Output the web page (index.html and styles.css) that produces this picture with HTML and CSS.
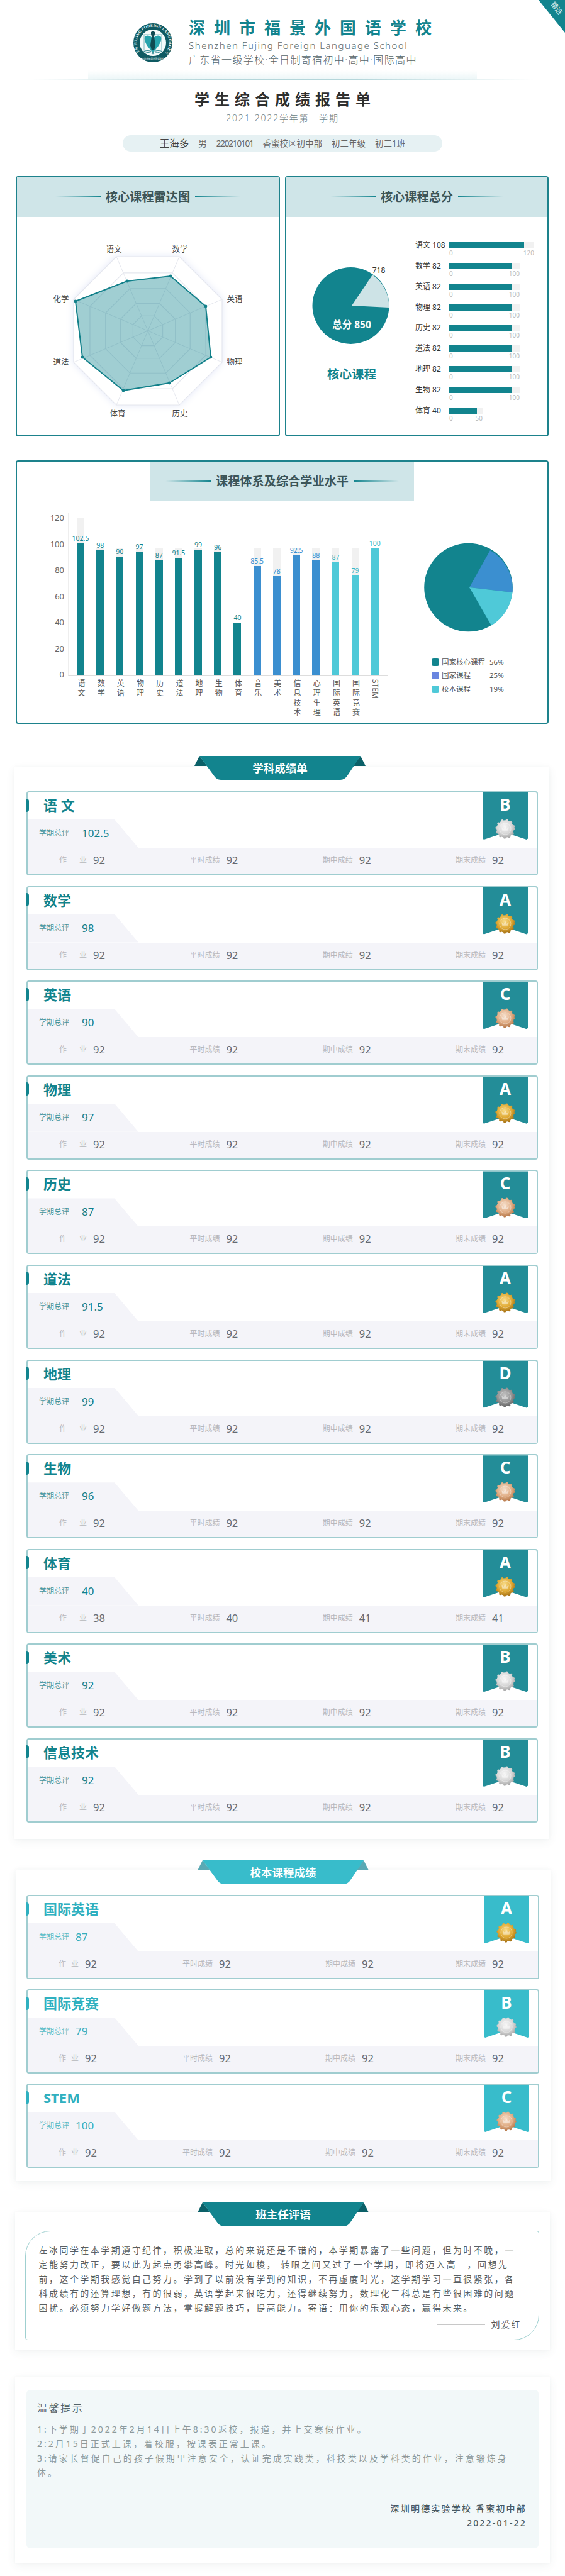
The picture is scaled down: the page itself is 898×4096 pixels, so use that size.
FILE: index.html
```html
<!DOCTYPE html>
<html lang="zh-CN">
<head>
<meta charset="utf-8">
<title>学生综合成绩报告单</title>
<link rel="stylesheet" href="styles.css">
</head>
<body>
<svg class="defs" aria-hidden="true">
  <defs>
    <radialGradient id="g-a" cx="45%" cy="35%" r="70%"><stop offset="0" stop-color="#f8dc8a"/><stop offset=".6" stop-color="#dfa832"/><stop offset="1" stop-color="#a87418"/></radialGradient>
    <radialGradient id="g-b" cx="45%" cy="35%" r="70%"><stop offset="0" stop-color="#f6f6f6"/><stop offset=".6" stop-color="#d8d8d8"/><stop offset="1" stop-color="#a9a9a9"/></radialGradient>
    <radialGradient id="g-c" cx="45%" cy="35%" r="70%"><stop offset="0" stop-color="#f6dfcb"/><stop offset=".6" stop-color="#e0ad85"/><stop offset="1" stop-color="#b87a4c"/></radialGradient>
    <radialGradient id="g-d" cx="45%" cy="35%" r="70%"><stop offset="0" stop-color="#c2c2c2"/><stop offset=".6" stop-color="#949494"/><stop offset="1" stop-color="#686868"/></radialGradient>
    <symbol id="medal-a" viewBox="-18 -18 36 36"><circle r="14.5" fill="url(#g-a)"/><circle class="scallop" r="14.5" stroke="url(#g-a)"/><circle class="medal-ring" r="9.5"/><path class="medal-crown" d="M-5 3 L-6 -3 L-2.5 0 L0 -5 L2.5 0 L6 -3 L5 3 Z"/></symbol>
    <symbol id="medal-b" viewBox="-18 -18 36 36"><circle r="14.5" fill="url(#g-b)"/><circle class="scallop" r="14.5" stroke="url(#g-b)"/><circle class="medal-ring" r="9.5"/><path class="medal-crown" d="M-5 3 L-6 -3 L-2.5 0 L0 -5 L2.5 0 L6 -3 L5 3 Z"/></symbol>
    <symbol id="medal-c" viewBox="-18 -18 36 36"><circle r="14.5" fill="url(#g-c)"/><circle class="scallop" r="14.5" stroke="url(#g-c)"/><circle class="medal-ring" r="9.5"/><path class="medal-crown" d="M-5 3 L-6 -3 L-2.5 0 L0 -5 L2.5 0 L6 -3 L5 3 Z"/></symbol>
    <symbol id="medal-d" viewBox="-18 -18 36 36"><circle r="14.5" fill="url(#g-d)"/><circle class="scallop" r="14.5" stroke="url(#g-d)"/><circle class="medal-ring" r="9.5"/><path class="medal-crown" d="M-5 3 L-6 -3 L-2.5 0 L0 -5 L2.5 0 L6 -3 L5 3 Z"/></symbol>
  </defs>
</svg>

<div class="page">
  <div class="corner"><span class="corner-text">精选</span></div>

  <header class="brand">
    <svg class="logo" viewBox="-31 -31 62 62">
      <defs><path id="logo-arc" d="M-20 16 A25.6 25.6 0 1 1 20 16"/></defs>
      <circle r="31" fill="#0f5a62"/>
      <text class="logo-text"><textPath href="#logo-arc" startOffset="50%" text-anchor="middle">SHENZHEN FUJING FOREIGN LANGUAGE SCHOOL</textPath></text>
      <text class="logo-cn" x="0" y="26.5" text-anchor="middle">深圳市福景外国语学校</text>
      <circle r="21" fill="#f4fafa"/>
      <rect x="-14" y="-13" width="28" height="25" fill="none" stroke="#7fb6bb" stroke-width="1"/>
      <path d="M-13 -9 C-9 -14 -3 -11 0 -6 C3 -11 9 -14 13 -9 C15 -2 7 9 0 15 C-7 9 -15 -2 -13 -9 Z" fill="#27a4ad"/>
      <path d="M-3 -14 H3 L2 -10 L4 4 L2 12 H-2 L-4 4 L-2 -10 Z" fill="#0f4a52"/>
      <path d="M-3 -17 L0 -19 L3 -17 L3 -14 H-3 Z" fill="#0f4a52"/>
      <path d="M-15 14 C-8 11 -3 13 0 16 C3 13 8 11 15 14 M-13 17 C-8 14 -3 16 0 18 C3 16 8 14 13 17" fill="none" stroke="#3a8f98" stroke-width="1"/>
    </svg>
    <div class="brand-text">
      <div class="school-cn">深圳市福景外国语学校</div>
      <div class="school-en">Shenzhen Fujing Foreign Language School</div>
      <div class="school-sub">广东省一级学校·全日制寄宿初中·高中·国际高中</div>
    </div>
  </header>
  <div class="rule-glow"></div>
  <div class="rule"></div>

  <h1 class="report-title">学生综合成绩报告单</h1>
  <div class="report-term">2021-2022学年第一学期</div>
  <div class="student">
    <span class="student-name">王海多</span>
    <span>男</span>
    <span class="student-id">220210101</span>
    <span>香蜜校区初中部</span>
    <span>初二年级</span>
    <span>初二1班</span>
  </div>

  <div class="two-up">
    <section class="panel panel-radar">
      <div class="panel-head"><i class="line line-l"></i><h2>核心课程雷达图</h2><i class="line line-r"></i></div>
      <svg class="radar" viewBox="27 343 416 347">
        <g transform="translate(235 524)">
          <polygon class="ring ring-outer" points="-50,-118 50,-118 118,-50 118,50 50,118 -50,118 -118,50 -118,-50"/>
          <polygon class="ring" transform="scale(.78)" points="-50,-118 50,-118 118,-50 118,50 50,118 -50,118 -118,50 -118,-50"/>
          <polygon class="ring" transform="scale(.57)" points="-50,-118 50,-118 118,-50 118,50 50,118 -50,118 -118,50 -118,-50"/>
          <polygon class="ring" transform="scale(.37)" points="-50,-118 50,-118 118,-50 118,50 50,118 -50,118 -118,50 -118,-50"/>
          <polygon class="ring" transform="scale(.2)" points="-50,-118 50,-118 118,-50 118,50 50,118 -50,118 -118,50 -118,-50"/>
          <path class="spoke" d="M0 0 L-50 -118 M0 0 L50 -118 M0 0 L118 -50 M0 0 L118 50 M0 0 L50 118 M0 0 L-50 118 M0 0 L-118 50 M0 0 L-118 -50"/>
        </g>
        <polygon class="radar-area" points="202,445 271,437 327,485 335,566 269,607 196,619 131,566 120,477"/>
        <g class="radar-dots">
          <circle cx="202" cy="445" r="2.4"/><circle cx="271" cy="437" r="2.4"/><circle cx="327" cy="485" r="2.4"/><circle cx="335" cy="566" r="2.4"/>
          <circle cx="269" cy="607" r="2.4"/><circle cx="196" cy="619" r="2.4"/><circle cx="131" cy="566" r="2.4"/><circle cx="120" cy="477" r="2.4"/>
        </g>
        <g class="radar-labels">
          <text x="181" y="399">语文</text><text x="286" y="399">数学</text><text x="373" y="478">英语</text><text x="373" y="578">物理</text>
          <text x="286" y="660">历史</text><text x="187" y="660">体育</text><text x="97" y="578">道法</text><text x="97" y="478">化学</text>
        </g>
      </svg>
    </section>

    <section class="panel panel-total">
      <div class="panel-head"><i class="line line-l"></i><h2>核心课程总分</h2><i class="line line-r"></i></div>
      <div class="total-body">
        <div class="total-pie">
          <svg class="pie-small" viewBox="455 413 205 140">
            <circle cx="557.5" cy="484" r="61" fill="#12848e"/>
            <path d="M559 484 L592 435 A61 61 0 0 1 618.4 487 Z" fill="#cde3e6"/>
            <text class="pie-note" x="602" y="432" text-anchor="middle">718</text>
            <text class="pie-total" x="559" y="520" text-anchor="middle">总分 850</text>
          </svg>
          <div class="pie-caption">核心课程</div>
        </div>
        <div class="hbars">
          <div class="hbar"><span class="hbar-label">语文 108</span><div class="hbar-col" style="width:135px"><div class="hbar-track"><div class="hbar-fill" style="width:88%"></div></div><div class="hbar-axis"><span>0</span><span>120</span></div></div></div>
          <div class="hbar"><span class="hbar-label">数学 82</span><div class="hbar-col" style="width:112px"><div class="hbar-track"><div class="hbar-fill" style="width:89%"></div></div><div class="hbar-axis"><span>0</span><span>100</span></div></div></div>
          <div class="hbar"><span class="hbar-label">英语 82</span><div class="hbar-col" style="width:112px"><div class="hbar-track"><div class="hbar-fill" style="width:89%"></div></div><div class="hbar-axis"><span>0</span><span>100</span></div></div></div>
          <div class="hbar"><span class="hbar-label">物理 82</span><div class="hbar-col" style="width:112px"><div class="hbar-track"><div class="hbar-fill" style="width:89%"></div></div><div class="hbar-axis"><span>0</span><span>100</span></div></div></div>
          <div class="hbar"><span class="hbar-label">历史 82</span><div class="hbar-col" style="width:112px"><div class="hbar-track"><div class="hbar-fill" style="width:89%"></div></div><div class="hbar-axis"><span>0</span><span>100</span></div></div></div>
          <div class="hbar"><span class="hbar-label">道法 82</span><div class="hbar-col" style="width:112px"><div class="hbar-track"><div class="hbar-fill" style="width:89%"></div></div><div class="hbar-axis"><span>0</span><span>100</span></div></div></div>
          <div class="hbar"><span class="hbar-label">地理 82</span><div class="hbar-col" style="width:112px"><div class="hbar-track"><div class="hbar-fill" style="width:89%"></div></div><div class="hbar-axis"><span>0</span><span>100</span></div></div></div>
          <div class="hbar"><span class="hbar-label">生物 82</span><div class="hbar-col" style="width:112px"><div class="hbar-track"><div class="hbar-fill" style="width:89%"></div></div><div class="hbar-axis"><span>0</span><span>100</span></div></div></div>
          <div class="hbar"><span class="hbar-label">体育 40</span><div class="hbar-col" style="width:53px"><div class="hbar-track"><div class="hbar-fill" style="width:83%"></div></div><div class="hbar-axis"><span>0</span><span>50</span></div></div></div>
        </div>
      </div>
    </section>
  </div>

  <section class="panel panel-wide">
    <div class="panel-head panel-head-mid"><i class="line line-l"></i><h2>课程体系及综合学业水平</h2><i class="line line-r"></i></div>
    <div class="wide-body">
      <div class="yaxis"><span>120</span><span>100</span><span>80</span><span>60</span><span>40</span><span>20</span><span>0</span></div>
      <div class="plot-wrap">
        <div class="plot">
          <div class="vcol core"><i class="vtrack" style="height:251px"></i><span class="vval">102.5</span><i class="vbar" style="height:210px"></i></div>
          <div class="vcol core"><i class="vtrack" style="height:203px"></i><span class="vval">98</span><i class="vbar" style="height:199px"></i></div>
          <div class="vcol core"><i class="vtrack" style="height:203px"></i><span class="vval">90</span><i class="vbar" style="height:189px"></i></div>
          <div class="vcol core"><i class="vtrack" style="height:203px"></i><span class="vval">97</span><i class="vbar" style="height:197px"></i></div>
          <div class="vcol core"><i class="vtrack" style="height:203px"></i><span class="vval">87</span><i class="vbar" style="height:183px"></i></div>
          <div class="vcol core"><i class="vtrack" style="height:203px"></i><span class="vval">91.5</span><i class="vbar" style="height:187px"></i></div>
          <div class="vcol core"><i class="vtrack" style="height:203px"></i><span class="vval">99</span><i class="vbar" style="height:200px"></i></div>
          <div class="vcol core"><i class="vtrack" style="height:203px"></i><span class="vval">96</span><i class="vbar" style="height:196px"></i></div>
          <div class="vcol core"><span class="vval">40</span><i class="vbar" style="height:84px"></i></div>
          <div class="vcol nat"><i class="vtrack" style="height:203px"></i><span class="vval">85.5</span><i class="vbar" style="height:174px"></i></div>
          <div class="vcol nat"><i class="vtrack" style="height:203px"></i><span class="vval">78</span><i class="vbar" style="height:158px"></i></div>
          <div class="vcol nat"><i class="vtrack" style="height:203px"></i><span class="vval">92.5</span><i class="vbar" style="height:191px"></i></div>
          <div class="vcol nat"><i class="vtrack" style="height:203px"></i><span class="vval">88</span><i class="vbar" style="height:183px"></i></div>
          <div class="vcol sch"><i class="vtrack" style="height:203px"></i><span class="vval">87</span><i class="vbar" style="height:180px"></i></div>
          <div class="vcol sch"><i class="vtrack" style="height:203px"></i><span class="vval">79</span><i class="vbar" style="height:159px"></i></div>
          <div class="vcol sch"><span class="vval">100</span><i class="vbar" style="height:202px"></i></div>
        </div>
        <div class="xlabels">
          <span>语文</span><span>数学</span><span>英语</span><span>物理</span><span>历史</span><span>道法</span><span>地理</span><span>生物</span>
          <span>体育</span><span>音乐</span><span>美术</span><span>信息技术</span><span>心理生理</span><span>国际英语</span><span>国际竞赛</span><span class="x-latin">STEM</span>
        </div>
      </div>
      <div class="mix">
        <svg class="pie-mix" viewBox="640 850 230 160">
          <circle cx="744.5" cy="932" r="70.3" fill="#12848e"/>
          <path d="M746 932 L779 873 A70.3 70.3 0 0 1 814.5 940 Z" fill="#3b8fd0"/>
          <path d="M746 932 L814.5 940 A70.3 70.3 0 0 1 781 992.5 Z" fill="#4fc9d8"/>
        </svg>
        <div class="legend">
          <i class="swatch sw-core"></i><span>国家核心课程</span><span>56%</span>
          <i class="swatch sw-nat"></i><span>国家课程</span><span>25%</span>
          <i class="swatch sw-sch"></i><span>校本课程</span><span>19%</span>
        </div>
      </div>
    </div>
  </section>

  <section class="sheet sheet-subject">
    <div class="ribbon ribbon-teal">
      <svg class="ribbon-art" viewBox="0 0 272 38"><path class="wing" d="M8 0 L0 16 H20 Z"/><path class="wing" d="M264 0 L272 16 H252 Z"/><path class="band" d="M8 0 H264 L244 30 Q239 38 232 38 H42 Q35 38 30 30 Z"/></svg>
      <span class="ribbon-title">学科成绩单</span>
    </div>
    <div class="courses">

      <article class="course">
        <div class="course-name">语 文</div>
        <div class="course-total"><span class="total-label">学期总评</span><span class="total-value">102.5</span></div>
        <div class="course-items"><div class="item"><span class="item-label item-wide">作业</span><b>92</b></div><div class="item"><span class="item-label">平时成绩</span><b>92</b></div><div class="item"><span class="item-label">期中成绩</span><b>92</b></div><div class="item"><span class="item-label">期末成绩</span><b>92</b></div></div>
        <div class="grade"><span class="grade-letter">B</span><svg class="medal"><use href="#medal-b"/></svg></div>
      </article>

      <article class="course">
        <div class="course-name">数学</div>
        <div class="course-total"><span class="total-label">学期总评</span><span class="total-value">98</span></div>
        <div class="course-items"><div class="item"><span class="item-label item-wide">作业</span><b>92</b></div><div class="item"><span class="item-label">平时成绩</span><b>92</b></div><div class="item"><span class="item-label">期中成绩</span><b>92</b></div><div class="item"><span class="item-label">期末成绩</span><b>92</b></div></div>
        <div class="grade"><span class="grade-letter">A</span><svg class="medal"><use href="#medal-a"/></svg></div>
      </article>

      <article class="course">
        <div class="course-name">英语</div>
        <div class="course-total"><span class="total-label">学期总评</span><span class="total-value">90</span></div>
        <div class="course-items"><div class="item"><span class="item-label item-wide">作业</span><b>92</b></div><div class="item"><span class="item-label">平时成绩</span><b>92</b></div><div class="item"><span class="item-label">期中成绩</span><b>92</b></div><div class="item"><span class="item-label">期末成绩</span><b>92</b></div></div>
        <div class="grade"><span class="grade-letter">C</span><svg class="medal"><use href="#medal-c"/></svg></div>
      </article>

      <article class="course">
        <div class="course-name">物理</div>
        <div class="course-total"><span class="total-label">学期总评</span><span class="total-value">97</span></div>
        <div class="course-items"><div class="item"><span class="item-label item-wide">作业</span><b>92</b></div><div class="item"><span class="item-label">平时成绩</span><b>92</b></div><div class="item"><span class="item-label">期中成绩</span><b>92</b></div><div class="item"><span class="item-label">期末成绩</span><b>92</b></div></div>
        <div class="grade"><span class="grade-letter">A</span><svg class="medal"><use href="#medal-a"/></svg></div>
      </article>

      <article class="course">
        <div class="course-name">历史</div>
        <div class="course-total"><span class="total-label">学期总评</span><span class="total-value">87</span></div>
        <div class="course-items"><div class="item"><span class="item-label item-wide">作业</span><b>92</b></div><div class="item"><span class="item-label">平时成绩</span><b>92</b></div><div class="item"><span class="item-label">期中成绩</span><b>92</b></div><div class="item"><span class="item-label">期末成绩</span><b>92</b></div></div>
        <div class="grade"><span class="grade-letter">C</span><svg class="medal"><use href="#medal-c"/></svg></div>
      </article>

      <article class="course">
        <div class="course-name">道法</div>
        <div class="course-total"><span class="total-label">学期总评</span><span class="total-value">91.5</span></div>
        <div class="course-items"><div class="item"><span class="item-label item-wide">作业</span><b>92</b></div><div class="item"><span class="item-label">平时成绩</span><b>92</b></div><div class="item"><span class="item-label">期中成绩</span><b>92</b></div><div class="item"><span class="item-label">期末成绩</span><b>92</b></div></div>
        <div class="grade"><span class="grade-letter">A</span><svg class="medal"><use href="#medal-a"/></svg></div>
      </article>

      <article class="course">
        <div class="course-name">地理</div>
        <div class="course-total"><span class="total-label">学期总评</span><span class="total-value">99</span></div>
        <div class="course-items"><div class="item"><span class="item-label item-wide">作业</span><b>92</b></div><div class="item"><span class="item-label">平时成绩</span><b>92</b></div><div class="item"><span class="item-label">期中成绩</span><b>92</b></div><div class="item"><span class="item-label">期末成绩</span><b>92</b></div></div>
        <div class="grade"><span class="grade-letter">D</span><svg class="medal"><use href="#medal-d"/></svg></div>
      </article>

      <article class="course">
        <div class="course-name">生物</div>
        <div class="course-total"><span class="total-label">学期总评</span><span class="total-value">96</span></div>
        <div class="course-items"><div class="item"><span class="item-label item-wide">作业</span><b>92</b></div><div class="item"><span class="item-label">平时成绩</span><b>92</b></div><div class="item"><span class="item-label">期中成绩</span><b>92</b></div><div class="item"><span class="item-label">期末成绩</span><b>92</b></div></div>
        <div class="grade"><span class="grade-letter">C</span><svg class="medal"><use href="#medal-c"/></svg></div>
      </article>

      <article class="course">
        <div class="course-name">体育</div>
        <div class="course-total"><span class="total-label">学期总评</span><span class="total-value">40</span></div>
        <div class="course-items"><div class="item"><span class="item-label item-wide">作业</span><b>38</b></div><div class="item"><span class="item-label">平时成绩</span><b>40</b></div><div class="item"><span class="item-label">期中成绩</span><b>41</b></div><div class="item"><span class="item-label">期末成绩</span><b>41</b></div></div>
        <div class="grade"><span class="grade-letter">A</span><svg class="medal"><use href="#medal-a"/></svg></div>
      </article>

      <article class="course">
        <div class="course-name">美术</div>
        <div class="course-total"><span class="total-label">学期总评</span><span class="total-value">92</span></div>
        <div class="course-items"><div class="item"><span class="item-label item-wide">作业</span><b>92</b></div><div class="item"><span class="item-label">平时成绩</span><b>92</b></div><div class="item"><span class="item-label">期中成绩</span><b>92</b></div><div class="item"><span class="item-label">期末成绩</span><b>92</b></div></div>
        <div class="grade"><span class="grade-letter">B</span><svg class="medal"><use href="#medal-b"/></svg></div>
      </article>

      <article class="course">
        <div class="course-name">信息技术</div>
        <div class="course-total"><span class="total-label">学期总评</span><span class="total-value">92</span></div>
        <div class="course-items"><div class="item"><span class="item-label item-wide">作业</span><b>92</b></div><div class="item"><span class="item-label">平时成绩</span><b>92</b></div><div class="item"><span class="item-label">期中成绩</span><b>92</b></div><div class="item"><span class="item-label">期末成绩</span><b>92</b></div></div>
        <div class="grade"><span class="grade-letter">B</span><svg class="medal"><use href="#medal-b"/></svg></div>
      </article>

    </div>
  </section>

  <section class="sheet sheet-school">
    <div class="ribbon ribbon-cyan">
      <svg class="ribbon-art" viewBox="0 0 272 38"><path class="wing" d="M8 0 L0 16 H20 Z"/><path class="wing" d="M264 0 L272 16 H252 Z"/><path class="band" d="M8 0 H264 L244 30 Q239 38 232 38 H42 Q35 38 30 30 Z"/></svg>
      <span class="ribbon-title">校本课程成绩</span>
    </div>
    <div class="courses courses-school">

      <article class="course course-school">
        <div class="course-name">国际英语</div>
        <div class="course-total"><span class="total-label">学期总评</span><span class="total-value">87</span></div>
        <div class="course-items"><div class="item"><span class="item-label item-narrow">作业</span><b>92</b></div><div class="item"><span class="item-label">平时成绩</span><b>92</b></div><div class="item"><span class="item-label">期中成绩</span><b>92</b></div><div class="item"><span class="item-label">期末成绩</span><b>92</b></div></div>
        <div class="grade"><span class="grade-letter">A</span><svg class="medal"><use href="#medal-a"/></svg></div>
      </article>

      <article class="course course-school">
        <div class="course-name">国际竞赛</div>
        <div class="course-total"><span class="total-label">学期总评</span><span class="total-value">79</span></div>
        <div class="course-items"><div class="item"><span class="item-label item-narrow">作业</span><b>92</b></div><div class="item"><span class="item-label">平时成绩</span><b>92</b></div><div class="item"><span class="item-label">期中成绩</span><b>92</b></div><div class="item"><span class="item-label">期末成绩</span><b>92</b></div></div>
        <div class="grade"><span class="grade-letter">B</span><svg class="medal"><use href="#medal-b"/></svg></div>
      </article>

      <article class="course course-school">
        <div class="course-name">STEM</div>
        <div class="course-total"><span class="total-label">学期总评</span><span class="total-value">100</span></div>
        <div class="course-items"><div class="item"><span class="item-label item-narrow">作业</span><b>92</b></div><div class="item"><span class="item-label">平时成绩</span><b>92</b></div><div class="item"><span class="item-label">期中成绩</span><b>92</b></div><div class="item"><span class="item-label">期末成绩</span><b>92</b></div></div>
        <div class="grade"><span class="grade-letter">C</span><svg class="medal"><use href="#medal-c"/></svg></div>
      </article>

    </div>
  </section>

  <section class="sheet sheet-comment">
    <div class="ribbon ribbon-teal">
      <svg class="ribbon-art" viewBox="0 0 272 38"><path class="wing" d="M8 0 L0 16 H20 Z"/><path class="wing" d="M264 0 L272 16 H252 Z"/><path class="band" d="M8 0 H264 L244 30 Q239 38 232 38 H42 Q35 38 30 30 Z"/></svg>
      <span class="ribbon-title">班主任评语</span>
    </div>
    <div class="comment">
      <p class="comment-text">左冰同学在本学期遵守纪律，积极进取，总的来说还是不错的，本学期暴露了一些问题，但为时不晚，一定能努力改正，要以此为起点勇攀高峰。时光如梭， 转眼之间又过了一个学期，即将迈入高三，回想先前，这个学期我感觉自己努力。学到了以前没有学到的知识，不再虚度时光，这学期学习一直很紧张，各科成绩有的还算理想，有的很弱，英语学起来很吃力，还得继续努力，数理化三科总是有些很困难的问题困扰。必须努力学好做题方法，掌握解题技巧，提高能力。寄语：用你的乐观心态，赢得未来。</p>
      <div class="signature"><i class="signature-line"></i><span>刘爱红</span></div>
    </div>
  </section>

  <section class="sheet sheet-tips">
    <div class="tips">
      <h3 class="tips-title">温馨提示</h3>
      <p class="tips-line">1:下学期于2022年2月14日上午8:30返校，报道，并上交寒假作业。</p>
      <p class="tips-line">2:2月15日正式上课，着校服，按课表正常上课。</p>
      <p class="tips-line">3:请家长督促自己的孩子假期里注意安全，认证完成实践类，科技类以及学科类的作业，注意锻炼身体。</p>
      <div class="tips-sign">深圳明德实验学校 香蜜初中部</div>
      <div class="tips-sign">2022-01-22</div>
    </div>
  </section>

  <div class="end-line"></div>
</div>
</body>
</html>
```

FILE: styles.css
```css
* { box-sizing: border-box; }
html, body { margin: 0; padding: 0; background: #fff; }
body { font-family: "Noto Sans", "Noto Sans CJK SC", sans-serif; color: #444; }
h1, h2, h3, p { margin: 0; }
i { display: block; }
.defs { position: absolute; width: 0; height: 0; }
.page { position: relative; width: 898px; height: 4096px; overflow: hidden; background: #fff; }

/* corner tag */
.corner { position: absolute; top: 0; right: 0; width: 42px; height: 52px; background: #12848e; clip-path: polygon(0 0, 100% 0, 100% 100%); }
.corner-text { position: absolute; top: 6px; right: 2px; font-size: 11px; line-height: 14px; color: #e6f4f5; transform: rotate(52deg); }

/* header */
.brand { display: flex; align-items: center; gap: 26px; padding: 37px 0 0 212px; height: 99px; }
.logo { width: 62px; height: 62px; flex: none; }
.logo-text { font: 700 6.2px "Liberation Serif", serif; fill: #e8f4f4; letter-spacing: .25px; }
.logo-cn { font-size: 3.6px; fill: #e8f4f4; }
.brand-text { margin-top: -1px; }
.school-cn { font-size: 26px; line-height: 26px; font-weight: 700; color: #12848e; letter-spacing: 14px; white-space: nowrap; }
.school-en { margin-top: 5px; font-size: 15px; line-height: 20px; font-weight: 300; color: #5b696c; letter-spacing: 1.5px; white-space: nowrap; }
.school-sub { margin-top: 3px; font-size: 16px; line-height: 20px; font-weight: 300; color: #556468; letter-spacing: 1.35px; white-space: nowrap; }
.rule-glow { height: 13px; margin: 13px 140px 0; background: linear-gradient(to bottom, rgba(236,246,247,0), #eef7f8); }
.rule { height: 2px; margin: 0 50px; background: linear-gradient(to right, rgba(180,214,218,0), #b4d6da 35%, #b4d6da 65%, rgba(180,214,218,0)); }

.report-title { margin-top: 15px; padding-left: 8px; text-align: center; font-size: 24px; line-height: 32px; font-weight: 700; letter-spacing: 8px; color: #2f2f2f; }
.report-term { margin-top: 4px; text-align: center; font-size: 14px; line-height: 20px; font-weight: 300; letter-spacing: 1.8px; color: #6f7f85; }
.student { display: flex; justify-content: center; align-items: center; gap: 15px; width: 508px; height: 26px; margin: 17px 0 0 195px; border-radius: 13px; background: #e6f1f3; font-size: 13.5px; line-height: 26px; color: #666; white-space: nowrap; }
.student-name { font-size: 15.5px; color: #444; }
.student-id { letter-spacing: -1.2px; }

/* panels */
.two-up { display: flex; gap: 8px; margin: 39px 0 0 25px; }
.panel { border: 2px solid #1d828c; border-radius: 4px; background: #fff; }
.panel-radar { width: 420px; height: 414px; }
.panel-total { width: 419px; height: 414px; }
.panel-head { display: flex; align-items: center; justify-content: center; gap: 8px; height: 63px; background: #cfe5e8; padding-bottom: 2px; }
.panel-head h2 { font-size: 19.2px; line-height: 28px; font-weight: 700; color: #3d5558; white-space: nowrap; }
.line { width: 72px; height: 2px; }
.line-l { background: linear-gradient(to right, rgba(18,132,142,0), #12848e); }
.line-r { background: linear-gradient(to left, rgba(18,132,142,0), #12848e); }

.radar { display: block; width: 416px; height: 347px; }
.ring { fill: none; stroke: #e5e7ee; stroke-width: 1.2; vector-effect: non-scaling-stroke; }
.ring-outer { filter: drop-shadow(0 0 6px #e4e9f8); fill: #fff; }
.spoke { fill: none; stroke: #e5e7ee; stroke-width: 1; }
.radar-area { fill: rgba(18,132,142,.4); stroke: #12808a; stroke-width: 2; }
.radar-dots circle { fill: #12808a; }
.radar-labels text { font-size: 12.5px; fill: #444; text-anchor: middle; }

.total-body { display: flex; }
.total-pie { width: 205px; padding-top: 70px; }
.pie-small { display: block; width: 205px; height: 140px; }
.pie-note { font-size: 12px; fill: #333; }
.pie-total { font-size: 15.5px; font-weight: 700; fill: #f4fbfb; }
.pie-caption { margin-top: 25px; padding-left: 3px; text-align: center; font-size: 19.5px; line-height: 30px; font-weight: 700; color: #12848e; }
.hbars { padding-top: 40px; }
.hbar { display: flex; height: 32.85px; }
.hbar-label { width: 54px; font-size: 12px; line-height: 10px; color: #333; white-space: nowrap; }
.hbar-track { height: 10px; background: #f1f1f1; }
.hbar-fill { height: 10px; background: #12848e; }
.hbar-axis { display: flex; justify-content: space-between; margin-top: 1px; font-size: 10px; line-height: 12px; color: #bbb; }

.panel-wide { width: 847px; height: 419px; margin: 38px 0 0 25px; }
.panel-head-mid { width: 419px; margin-left: 212px; }
.wide-body { display: flex; margin-top: 18px; }
.yaxis { display: flex; flex-direction: column; justify-content: space-between; align-items: flex-end; width: 75px; height: 263px; margin: 1px 6px 0 0; font-size: 13px; line-height: 14px; color: #666; }
.plot-wrap { width: 509px; flex: none; }
.plot { display: flex; height: 260px; padding-left: 3.4px; border-left: 1px solid #eee; border-bottom: 1px solid #ddd; }
.vcol { position: relative; display: flex; flex-direction: column; align-items: center; justify-content: flex-end; width: 31.2px; flex: none; }
.vtrack { position: absolute; bottom: 0; left: 9.6px; width: 12px; background: #f1f1f1; }
.vval { position: relative; font-size: 10.5px; line-height: 14px; margin-bottom: 1px; white-space: nowrap; }
.vbar { position: relative; width: 12px; }
.core .vbar { background: #12848e; } .core .vval { color: #12848e; }
.nat .vbar { background: #3b8fd0; } .nat .vval { color: #3b8fd0; }
.sch .vbar { background: #4fc9d8; } .sch .vval { color: #38b8c8; }
.xlabels { display: flex; padding: 5px 0 0 4.4px; }
.xlabels span { display: flex; align-items: center; justify-content: flex-start; width: 31.2px; flex: none; writing-mode: vertical-rl; font-size: 12px; line-height: 14px; letter-spacing: 3.6px; color: #555; white-space: nowrap; }
.xlabels .x-latin { letter-spacing: 0; }

.mix { width: 230px; margin-left: 23px; padding-top: 37px; }
.pie-mix { display: block; width: 230px; height: 160px; }
.legend { display: grid; grid-template-columns: 12px 72px auto; column-gap: 4px; align-items: center; margin: 30px 0 0 46px; font-size: 11.5px; line-height: 21.4px; color: #555; white-space: nowrap; }
.swatch { width: 12px; height: 12px; border-radius: 3px; }
.sw-core { background: #12848e; } .sw-nat { background: #6a86e0; } .sw-sch { background: #4fc9d8; }

/* white sheets */
.sheet { width: 850px; background: #fff; box-shadow: 0 4px 14px rgba(60,80,90,.07), 0 0 6px rgba(60,80,90,.03); }
.sheet-subject { margin: 69px 0 0 23px; padding: 0 18px 26px 19px; height: 1704px; }
.sheet-school { margin: 49px 0 0 25px; padding: 0 18px 21px 17px; height: 495px; }
.sheet-comment { margin: 50px 0 0 24px; padding: 0 17px 15px 16px; height: 218px; }
.sheet-tips { margin: 44px 0 0 24px; padding: 20px 18px 0 18px; height: 295px; }

.ribbon { position: relative; display: flex; align-items: center; justify-content: center; width: 272px; height: 38px; }
.sheet-subject .ribbon { top: -18px; margin: 0 0 0 267px; }
.sheet-school .ribbon { top: -15px; margin: 0 0 2px 272px; }
.sheet-comment .ribbon { top: -16px; margin: 0 0 0 274px; }
.ribbon-art { position: absolute; inset: 0; width: 100%; height: 100%; }
.ribbon-teal .band { fill: #12848e; } .ribbon-teal .wing { fill: #0b6068; }
.ribbon-cyan .band { fill: #38bccb; } .ribbon-cyan .wing { fill: #5aa9b4; }
.ribbon-title { position: relative; font-size: 17.5px; line-height: 24px; font-weight: 700; color: #fff; }

/* course cards */
.courses { display: flex; flex-direction: column; gap: 16.6px; }
.courses-school { gap: 16px; }
.course { position: relative; display: flex; flex-direction: column; height: 134px; border: 2px solid #a0cdd0; border-radius: 4px; background: #fff; --accent: #12848e; --banner: #238d98; }
.course-school { --accent: #2fb0c0; --banner: #38bccb; }
.course-name { display: flex; align-items: center; gap: 23px; height: 43px; margin-left: -2px; padding-bottom: 3px; font-size: 22px; line-height: 30px; font-weight: 700; color: var(--accent); }
.course-name::before { content: ""; width: 4px; height: 21px; border-radius: 0 4px 4px 0; background: var(--accent); }
.course-total { display: flex; align-items: center; gap: 20px; width: 176px; height: 45px; padding: 0 0 1px 18px; background: #f4f4f9; clip-path: polygon(0 0, 138px 0, 100% 100%, 0 100%); white-space: nowrap; }
.course-school .course-total { gap: 10px; }
.total-label { font-size: 12px; line-height: 16px; color: #3f95a0; }
.course-school .total-label { color: #55bcc8; }
.total-value { font-size: 17px; line-height: 22px; color: #14808a; }
.course-school .total-value { color: #35aebd; }
.course-items { display: grid; grid-template-columns: 123px repeat(3, 211.3px); flex: 1; background: #f4f4f9; }
.course-school .course-items { grid-template-columns: 110px 213px 227px 207px; }
.item { display: flex; align-items: center; justify-content: flex-end; gap: 10px; padding-bottom: 2px; white-space: nowrap; }
.item-label { font-size: 12px; line-height: 16px; color: #b8b8bd; }
.item-wide { width: 44px; text-align-last: justify; }
.item-narrow { width: 32px; text-align-last: justify; }
.item b { font-size: 16.5px; line-height: 22px; font-weight: 400; color: #666a72; }
.grade { position: absolute; top: 0; right: 14px; display: flex; flex-direction: column; align-items: center; width: 72px; height: 75px; }
.grade::before { content: ""; position: absolute; inset: 0; background: var(--banner); clip-path: polygon(0 0, 100% 0, 100% 98%, 97% 100%, 50% 85%, 3% 100%, 0 98%); }
.grade-letter { position: relative; font-size: 26px; line-height: 38px; font-weight: 700; color: #fff; }
.medal { position: relative; display: block; width: 36px; height: 36px; margin-top: 3px; }
.scallop { fill: none; stroke-width: 4.4; stroke-linecap: round; stroke-dasharray: 0 7.854; }
.medal-ring { fill: none; stroke: rgba(255,255,255,.4); stroke-width: 1; }
.medal-crown { fill: rgba(255,255,255,.45); }

/* comment */
.comment { height: 174px; margin-top: -9px; padding: 18px 34.5px 0 20.5px; border: 1.5px solid #9fd0d0; border-radius: 40px 4px 40px 4px; }
.comment-text { font-size: 14px; line-height: 23px; letter-spacing: 2.46px; color: #5a5f63; }
.signature { display: flex; align-items: center; justify-content: flex-end; gap: 10px; margin: 5px -7px 0 0; font-size: 14px; line-height: 20px; letter-spacing: 2px; color: #555; }
.signature-line { width: 77px; height: 1px; background: #c8c8c8; }

/* tips */
.tips { height: 252px; padding: 17px 19px 0 17px; border-radius: 6px; background: #f2f8f9; }
.tips-title { font-size: 16px; line-height: 24px; font-weight: 400; letter-spacing: 2.6px; color: #55646a; margin-bottom: 10px; }
.tips-line { font-size: 14px; line-height: 23px; letter-spacing: 3px; color: #8d9a9c; }
.tips-line:last-of-type { margin-bottom: 34px; }
.tips-sign { text-align: right; font-size: 14px; line-height: 23px; font-weight: 500; letter-spacing: 2.2px; color: #4a5a62; }

.end-line { height: 1px; margin-top: 22px; background: #555; }
```
